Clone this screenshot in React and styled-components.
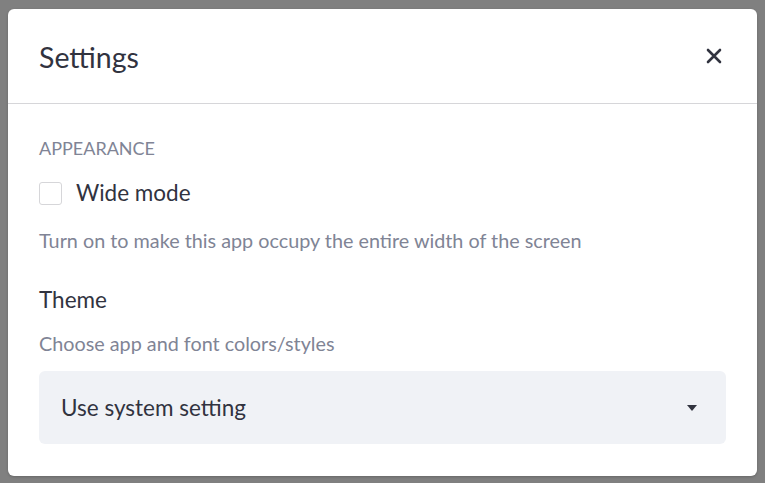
import React from "react";
import styled, { createGlobalStyle } from "styled-components";

const Global = createGlobalStyle`
  html, body {
    margin: 0;
    padding: 0;
    background: #808080;
    font-family: "Lato", "Noto Sans", sans-serif;
  }
`;

const App = () => {
  return (
    <>
      <Global />
      <Backdrop>
        <Modal>
          <Header>
            <Title>Settings</Title>
            <Close aria-label="Close">
              <svg width="16" height="16" viewBox="0 0 16 16">
                <path
                  d="M2 2 L14 14 M14 2 L2 14"
                  stroke="#31333f"
                  strokeWidth="2.6"
                  strokeLinecap="round"
                />
              </svg>
            </Close>
          </Header>
          <Body>
            <SectionLabel>APPEARANCE</SectionLabel>
            <CheckRow>
              <Box />
              <Label>Wide mode</Label>
            </CheckRow>
            <Help $gap={21}>Turn on to make this app occupy the entire width of the screen</Help>
            <Label $gap={34}>Theme</Label>
            <Help $gap={17}>Choose app and font colors/styles</Help>
            <Select>
              <span>Use system setting</span>
              <svg width="12" height="8" viewBox="0 0 12 8">
                <path d="M1 1 L11 1 L6 7 Z" fill="#31333f" />
              </svg>
            </Select>
          </Body>
        </Modal>
      </Backdrop>
    </>
  );
};
export default App;

const Backdrop = styled.div`
  width: 765px;
  height: 483px;
  padding: 9px 8px 0 8px;
  box-sizing: border-box;
  background: #808080;
`;

const Modal = styled.div`
  width: 749px;
  height: 467px;
  background: #ffffff;
  border-radius: 6px;
  box-shadow: 0 1px 3px rgba(0, 0, 0, 0.2);
  display: flex;
  flex-direction: column;
`;

const Header = styled.div`
  height: 94px;
  display: flex;
  align-items: center;
  justify-content: space-between;
  padding: 0 35px 0 31px;
  border-bottom: 1px solid #d6d6d9;
`;

const Title = styled.div`
  font-size: 28.5px;
  color: #31333f;
  padding-top: 2px;
`;

const Close = styled.button`
  border: none;
  background: none;
  padding: 0;
  width: 16px;
  height: 16px;
  display: flex;
  cursor: pointer;
`;

const Body = styled.div`
  padding: 33px 31px 0 31px;
  display: flex;
  flex-direction: column;
`;

const SectionLabel = styled.div`
  font-size: 18px;
  color: #808495;
  line-height: 22px;
`;

const CheckRow = styled.div`
  display: flex;
  align-items: center;
  gap: 14px;
  margin-top: 20px;
`;

const Box = styled.div`
  width: 23px;
  height: 23px;
  box-sizing: border-box;
  border: 1px solid #d6d6d9;
  border-radius: 3px;
`;

const Label = styled.div`
  font-size: 22.5px;
  color: #31333f;
  line-height: 28px;
  margin-top: ${(p) => (p.$gap ? `${p.$gap}px` : "0")};
`;

const Help = styled.div`
  font-size: 19.8px;
  color: #808495;
  line-height: 24px;
  margin-top: ${(p) => p.$gap}px;
`;

const Select = styled.div`
  margin-top: 16px;
  height: 73px;
  width: 687px;
  box-sizing: border-box;
  background: #f0f2f6;
  border-radius: 6px;
  display: flex;
  align-items: center;
  justify-content: space-between;
  padding: 0 28px 0 22px;
  font-size: 22.5px;
  color: #31333f;
`;
